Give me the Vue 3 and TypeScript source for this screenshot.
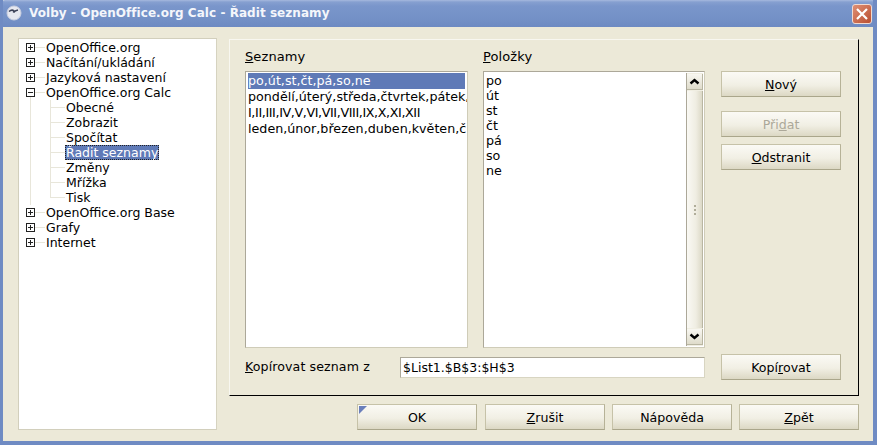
<script setup lang="ts">
interface TreeRow { label: string; kind: 'plus' | 'minus' | 'child'; selected?: boolean; last?: boolean }
const rows: TreeRow[] = [
  { label: 'OpenOffice.org', kind: 'plus' },
  { label: 'Načítání/ukládání', kind: 'plus' },
  { label: 'Jazyková nastavení', kind: 'plus' },
  { label: 'OpenOffice.org Calc', kind: 'minus' },
  { label: 'Obecné', kind: 'child' },
  { label: 'Zobrazit', kind: 'child' },
  { label: 'Spočítat', kind: 'child' },
  { label: 'Řadit seznamy', kind: 'child', selected: true },
  { label: 'Změny', kind: 'child' },
  { label: 'Mřížka', kind: 'child' },
  { label: 'Tisk', kind: 'child', last: true },
  { label: 'OpenOffice.org Base', kind: 'plus' },
  { label: 'Grafy', kind: 'plus' },
  { label: 'Internet', kind: 'plus' },
]
const lists = ['po,út,st,čt,pá,so,ne', 'pondělí,úterý,středa,čtvrtek,pátek,', 'I,II,III,IV,V,VI,VII,VIII,IX,X,XI,XII', 'leden,únor,březen,duben,květen,č']
const items = ['po', 'út', 'st', 'čt', 'pá', 'so', 'ne']
</script>

<template>
  <div class="window">
    <header class="titlebar">
      <svg class="appicon" width="16" height="16" viewBox="0 0 16 16">
        <circle cx="8" cy="8" r="7" fill="#e6e8f0" stroke="#c9cfe0" />
        <path d="M3 6.5 Q6 4 8 6 L7.5 7.5 Q9 5.5 12 5" fill="none" stroke="#3c4258" stroke-width="1.6" />
      </svg>
      <span class="title">Volby - OpenOffice.org Calc - Řadit seznamy</span>
      <button class="close" aria-label="Zavřít">
        <svg width="14" height="14" viewBox="0 0 14 14">
          <path d="M2 2 L12 12 M12 2 L2 12" stroke="#fff" stroke-width="2.2" fill="none" />
        </svg>
      </button>
    </header>
    <div class="body">
      <nav class="tree">
        <div v-for="r in rows" :key="r.label" class="row" :class="[r.kind, { last: r.last }]">
          <span v-if="r.kind !== 'child'" class="expander"><i class="h"></i><i v-if="r.kind === 'plus'" class="v"></i></span>
          <span class="connector"></span>
          <span class="label" :class="{ selected: r.selected }">{{ r.label }}</span>
        </div>
      </nav>
      <div class="right">
        <section class="panel">
          <div class="columns">
            <div class="col first">
              <div class="cap"><u>S</u>eznamy</div>
              <div class="listbox">
                <div v-for="(l, i) in lists" :key="l" class="li wide" :class="{ on: i === 0, roman: i === 2 }">{{ l }}</div>
              </div>
            </div>
            <div class="col second">
              <div class="cap"><u>P</u>oložky</div>
              <div class="listbox items">
                <div class="itemtext">
                  <div v-for="t in items" :key="t" class="li">{{ t }}</div>
                </div>
                <div class="scrollbar">
                  <div class="arrow">
                    <svg width="11" height="7" viewBox="0 0 11 7"><path d="M1.5 5.5 L5.5 2 L9.5 5.5" fill="none" stroke="#000" stroke-width="2.4" /></svg>
                  </div>
                  <div class="thumb"><span class="grip"></span><span class="grip"></span><span class="grip"></span></div>
                  <div class="arrow">
                    <svg width="11" height="7" viewBox="0 0 11 7"><path d="M1.5 1.5 L5.5 5 L9.5 1.5" fill="none" stroke="#000" stroke-width="2.4" /></svg>
                  </div>
                </div>
              </div>
            </div>
            <div class="actions">
              <button class="btn"><u>N</u>ový</button>
              <button class="btn disabled add">Při<u>d</u>at</button>
              <button class="btn rem"><u>O</u>dstranit</button>
            </div>
          </div>
          <div class="copyrow">
            <label class="copylabel"><u>K</u>opírovat seznam z</label>
            <input class="copyinput" value="$List1.$B$3:$H$3" />
            <button class="btn copybtn">Kopí<u>r</u>ovat</button>
          </div>
        </section>
        <footer class="footer">
          <button class="btn default">OK</button>
          <button class="btn"><u>Z</u>rušit</button>
          <button class="btn">Nápověda</button>
          <button class="btn"><u>Z</u>pět</button>
        </footer>
      </div>
    </div>
  </div>
</template>

<style>
html, body { margin: 0; background: #6f8bc3; }
</style>

<style scoped>
.window {
  width: 877px;
  height: 445px;
  display: flex;
  flex-direction: column;
  box-sizing: border-box;
  font-family: "DejaVu Sans", sans-serif;
  font-size: 12.5px;
  color: #000;
  background: #ece9d8;
  overflow: hidden;
  border-left: 3px solid #6f8bc3;
  border-right: 4px solid #6f8bc3;
  border-bottom: 4px solid #6f8bc3;
}
.titlebar {
  height: 27px;
  margin: 0 -4px 0 -3px;
  flex: none;
  display: flex;
  align-items: center;
  padding: 0 5px 0 6px;
  border-radius: 5px 5px 0 0;
  background: linear-gradient(#a6b9de 0, #86a0d0 2px, #7a96cb 6px, #7390c6 20px, #6d8ac2 27px);
}
.appicon { flex: none; margin-right: 7px; margin-top: -2px; }
.title {
  flex: 1;
  color: #f4f6fb;
  font-weight: bold;
  font-size: 12px;
  letter-spacing: 0.05px;
  margin-top: -1px;
}
.close {
  width: 20px;
  height: 20px;
  padding: 0;
  margin-top: 1px;
  display: flex;
  align-items: center;
  justify-content: center;
  border: 1px solid #f1d9cf;
  border-radius: 3px;
  background: linear-gradient(135deg, #df8f74, #b94f31);
}
.body {
  flex: 1;
  display: flex;
  padding: 11px 14px 0 15px;
  min-height: 0;
}
.tree {
  width: 199px;
  height: 392px;
  flex: none;
  box-sizing: border-box;
  background: #fff;
  border: 1px solid #d2cfbc;
  border-right-color: #d6d3c0;
  padding-top: 1px;
  margin-right: 12px;
}
.row {
  height: 15px;
  line-height: 15px;
  display: flex;
  align-items: center;
  position: relative;
  white-space: nowrap;
}
.expander {
  width: 9px;
  height: 9px;
  margin-left: 7px;
  flex: none;
  box-sizing: border-box;
  border: 1px solid #222;
  background: #fff;
  position: relative;
}
.expander .h { position: absolute; left: 1px; right: 1px; top: 3px; height: 1px; background: #222; }
.expander .v { position: absolute; top: 1px; bottom: 1px; left: 3px; width: 1px; background: #222; }
.connector { width: 10px; height: 1px; background: #e8e6da; flex: none; }
.row.child .connector { width: 15px; margin-left: 31px; }
.row.child::before {
  content: "";
  position: absolute;
  left: 31px;
  top: 0;
  bottom: 0;
  width: 1px;
  background: #e8e6da;
}
.row.child.last::before { bottom: 7px; }
.row.minus::after, .row.child::after {
  content: "";
  position: absolute;
  left: 11px;
  top: 12px;
  bottom: 0;
  width: 1px;
  background: #e8e6da;
}
.row.child::after { top: 0; }
.label { padding: 0 1px; }
.label.selected {
  background: #5f7ab7;
  color: #fff;
  outline: 1px dotted #222;
  outline-offset: -1px;
}
.right {
  flex: 1;
  display: flex;
  flex-direction: column;
  min-width: 0;
}
.panel {
  height: 357px;
  margin-top: 1px;
  flex: none;
  box-sizing: border-box;
  border-top: 1px solid #f8f7f0;
  border-left: 1px solid #f8f7f0;
  border-right: 1px solid #000;
  border-bottom: 1px solid #000;
  padding: 0 17px 0 15px;
  display: flex;
  flex-direction: column;
}
.columns { display: flex; height: 308px; flex: none; }
.col { display: flex; flex-direction: column; flex: none; }
.col.first { width: 223px; margin-right: 15px; }
.col.second { width: 222px; margin-right: 16px; }
.cap { height: 31px; line-height: 33px; font-size: 13px; letter-spacing: 0.1px; flex: none; }
.listbox {
  height: 277px;
  box-sizing: border-box;
  background: #fff;
  border: 1px solid #cfccb8;
  border-top-color: #aca899;
  border-left-color: #aca899;
  padding: 1px 2px;
  overflow: hidden;
  display: flex;
  flex-direction: column;
}
.li { height: 15px; line-height: 15px; font-size: 12.7px; white-space: nowrap; flex: none; }
.li.wide { height: 16px; line-height: 16px; }
.li.roman { letter-spacing: -0.38px; }
.li.on { background: #5f7ab7; color: #fff; }
.listbox.items { flex-direction: row; padding: 0 0 0 2px; }
.itemtext { flex: 1; padding-top: 1px; }
.scrollbar {
  width: 17px;
  flex: none;
  display: flex;
  flex-direction: column;
  box-sizing: border-box;
  background: #f0eee2;
  border-left: 1px solid #aca899;
  padding: 1px 0;
  margin: 1px 1px 1px 0;
  gap: 1px;
}
.arrow {
  height: 15px;
  flex: none;
  display: flex;
  align-items: center;
  justify-content: center;
  background: linear-gradient(#f8f7f1, #dfdccb);
  border-right: 1px solid #b9b6a2;
  border-bottom: 1px solid #b9b6a2;
}
.thumb {
  flex: 1;
  display: flex;
  flex-direction: column;
  align-items: center;
  justify-content: center;
  gap: 2px;
  background: linear-gradient(90deg, #faf9f4, #efede2 60%, #dcd9c7);
  border-right: 1px solid #b9b6a2;
}
.grip { width: 2px; height: 2px; background: #b0ad9a; }
.actions {
  width: 120px;
  flex: none;
  padding-top: 31px;
  display: flex;
  flex-direction: column;
}
.btn {
  width: 120px;
  height: 26px;
  padding: 0;
  box-sizing: border-box;
  border: 1px solid #c6c2a8;
  border-bottom: 1px solid #aaa68b;
  border-right: 1px solid #b6b297;
  border-radius: 0;
  background: linear-gradient(#fbfaf5, #f1efe4 55%, #dcd8c4);
  font-family: "DejaVu Sans", sans-serif;
  font-size: 12.6px;
  color: #000;
  flex: none;
}
.btn.disabled { color: #aca899; }
.btn.add { margin-top: 14px; }
.btn.rem { margin-top: 7px; }
.copyrow { display: flex; align-items: center; padding-top: 6px; }
.copylabel { width: 155px; flex: none; margin-top: -2px; font-size: 12.6px; letter-spacing: 0.1px; }
.copyinput {
  width: 305px;
  height: 21px;
  flex: none;
  box-sizing: border-box;
  margin: 1px 16px 0 0;
  padding: 0 2px;
  border: 1px solid #d8d5c2;
  border-top-color: #aca899;
  border-left-color: #aca899;
  background: #fff;
  font-family: "DejaVu Sans", sans-serif;
  font-size: 12.5px;
  color: #000;
  outline: none;
}
.footer {
  display: flex;
  justify-content: flex-end;
  gap: 7px;
  padding-top: 8px;
}
.btn.default { position: relative; margin-right: 1px; }
.btn.default::before {
  content: "";
  position: absolute;
  left: 1px;
  top: 1px;
  border-style: solid;
  border-width: 8px 8px 0 0;
  border-color: #6a7fbb transparent transparent transparent;
}
</style>
